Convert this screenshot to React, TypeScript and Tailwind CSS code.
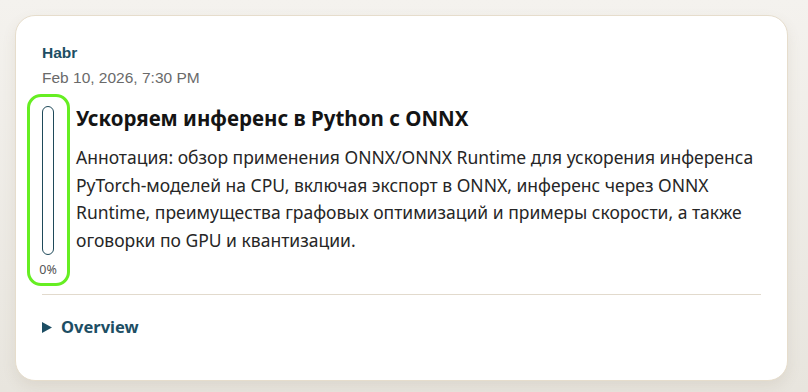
import React from "react";

export default function App() {
  return (
    <div className="w-[808px] h-[392px] bg-linear-to-b from-[#f4f2ee] to-[#e8e5de] p-[15px] overflow-hidden">
      <div
        className="w-[773px] h-[366px] rounded-[20px] border border-[#e6ddcc] bg-white px-[26px] pt-[27px] shadow-[0_6px_14px_rgba(120,100,70,0.10)]"
        style={{ fontFamily: '"Noto Sans", sans-serif' }}
      >
        <div className="text-[15.5px] leading-[20px] font-bold text-[#1d4e64]" style={{ fontFamily: '"Liberation Sans", Arial, sans-serif' }}>
          Habr
        </div>
        <div className="mt-[5px] text-[15.5px] leading-[20px] text-[#6a6a6a]" style={{ fontFamily: '"Liberation Sans", Arial, sans-serif' }}>
          Feb 10, 2026, 7:30 PM
        </div>
        <div className="mt-[16px] flex gap-[22px]">
          <div className="relative w-[12px] shrink-0 flex flex-col items-center">
            <div className="absolute left-[-15px] top-[-10px] w-[43px] h-[192px] rounded-[14px] border-[3px] border-[#66ee22]" />
            <div className="mt-[2px] w-[12px] h-[149px] rounded-full border-[1.5px] border-[#1f4a5a]" />
            <div className="mt-[7px] text-[12.5px] leading-[16px] text-[#555]">0%</div>
          </div>
          <div className="flex-1">
            <div className="text-[20.5px] leading-[28px] font-bold text-[#141414]">
              Ускоряем инференс в Python с ONNX
            </div>
            <div className="mt-[12px] text-[17.5px] leading-[27.67px] text-[#262626]">
              Аннотация: обзор применения ONNX/ONNX Runtime для ускорения инференса PyTorch-моделей на CPU, включая экспорт в ONNX, инференс через ONNX Runtime, преимущества графовых оптимизаций и примеры скорости, а также оговорки по GPU и квантизации.
            </div>
          </div>
        </div>
        <div className="mt-[16px] h-px bg-[#e2dacd]" />
        <div className="mt-[22px] flex items-center gap-[9px] text-[16.5px] leading-[20px] font-bold text-[#1d4e64]">
          <svg width="10" height="11" viewBox="0 0 10 11"><path d="M0 0 L10 5.5 L0 11 Z" fill="#1d4e64" /></svg>
          <span>Overview</span>
        </div>
      </div>
    </div>
  );
}
